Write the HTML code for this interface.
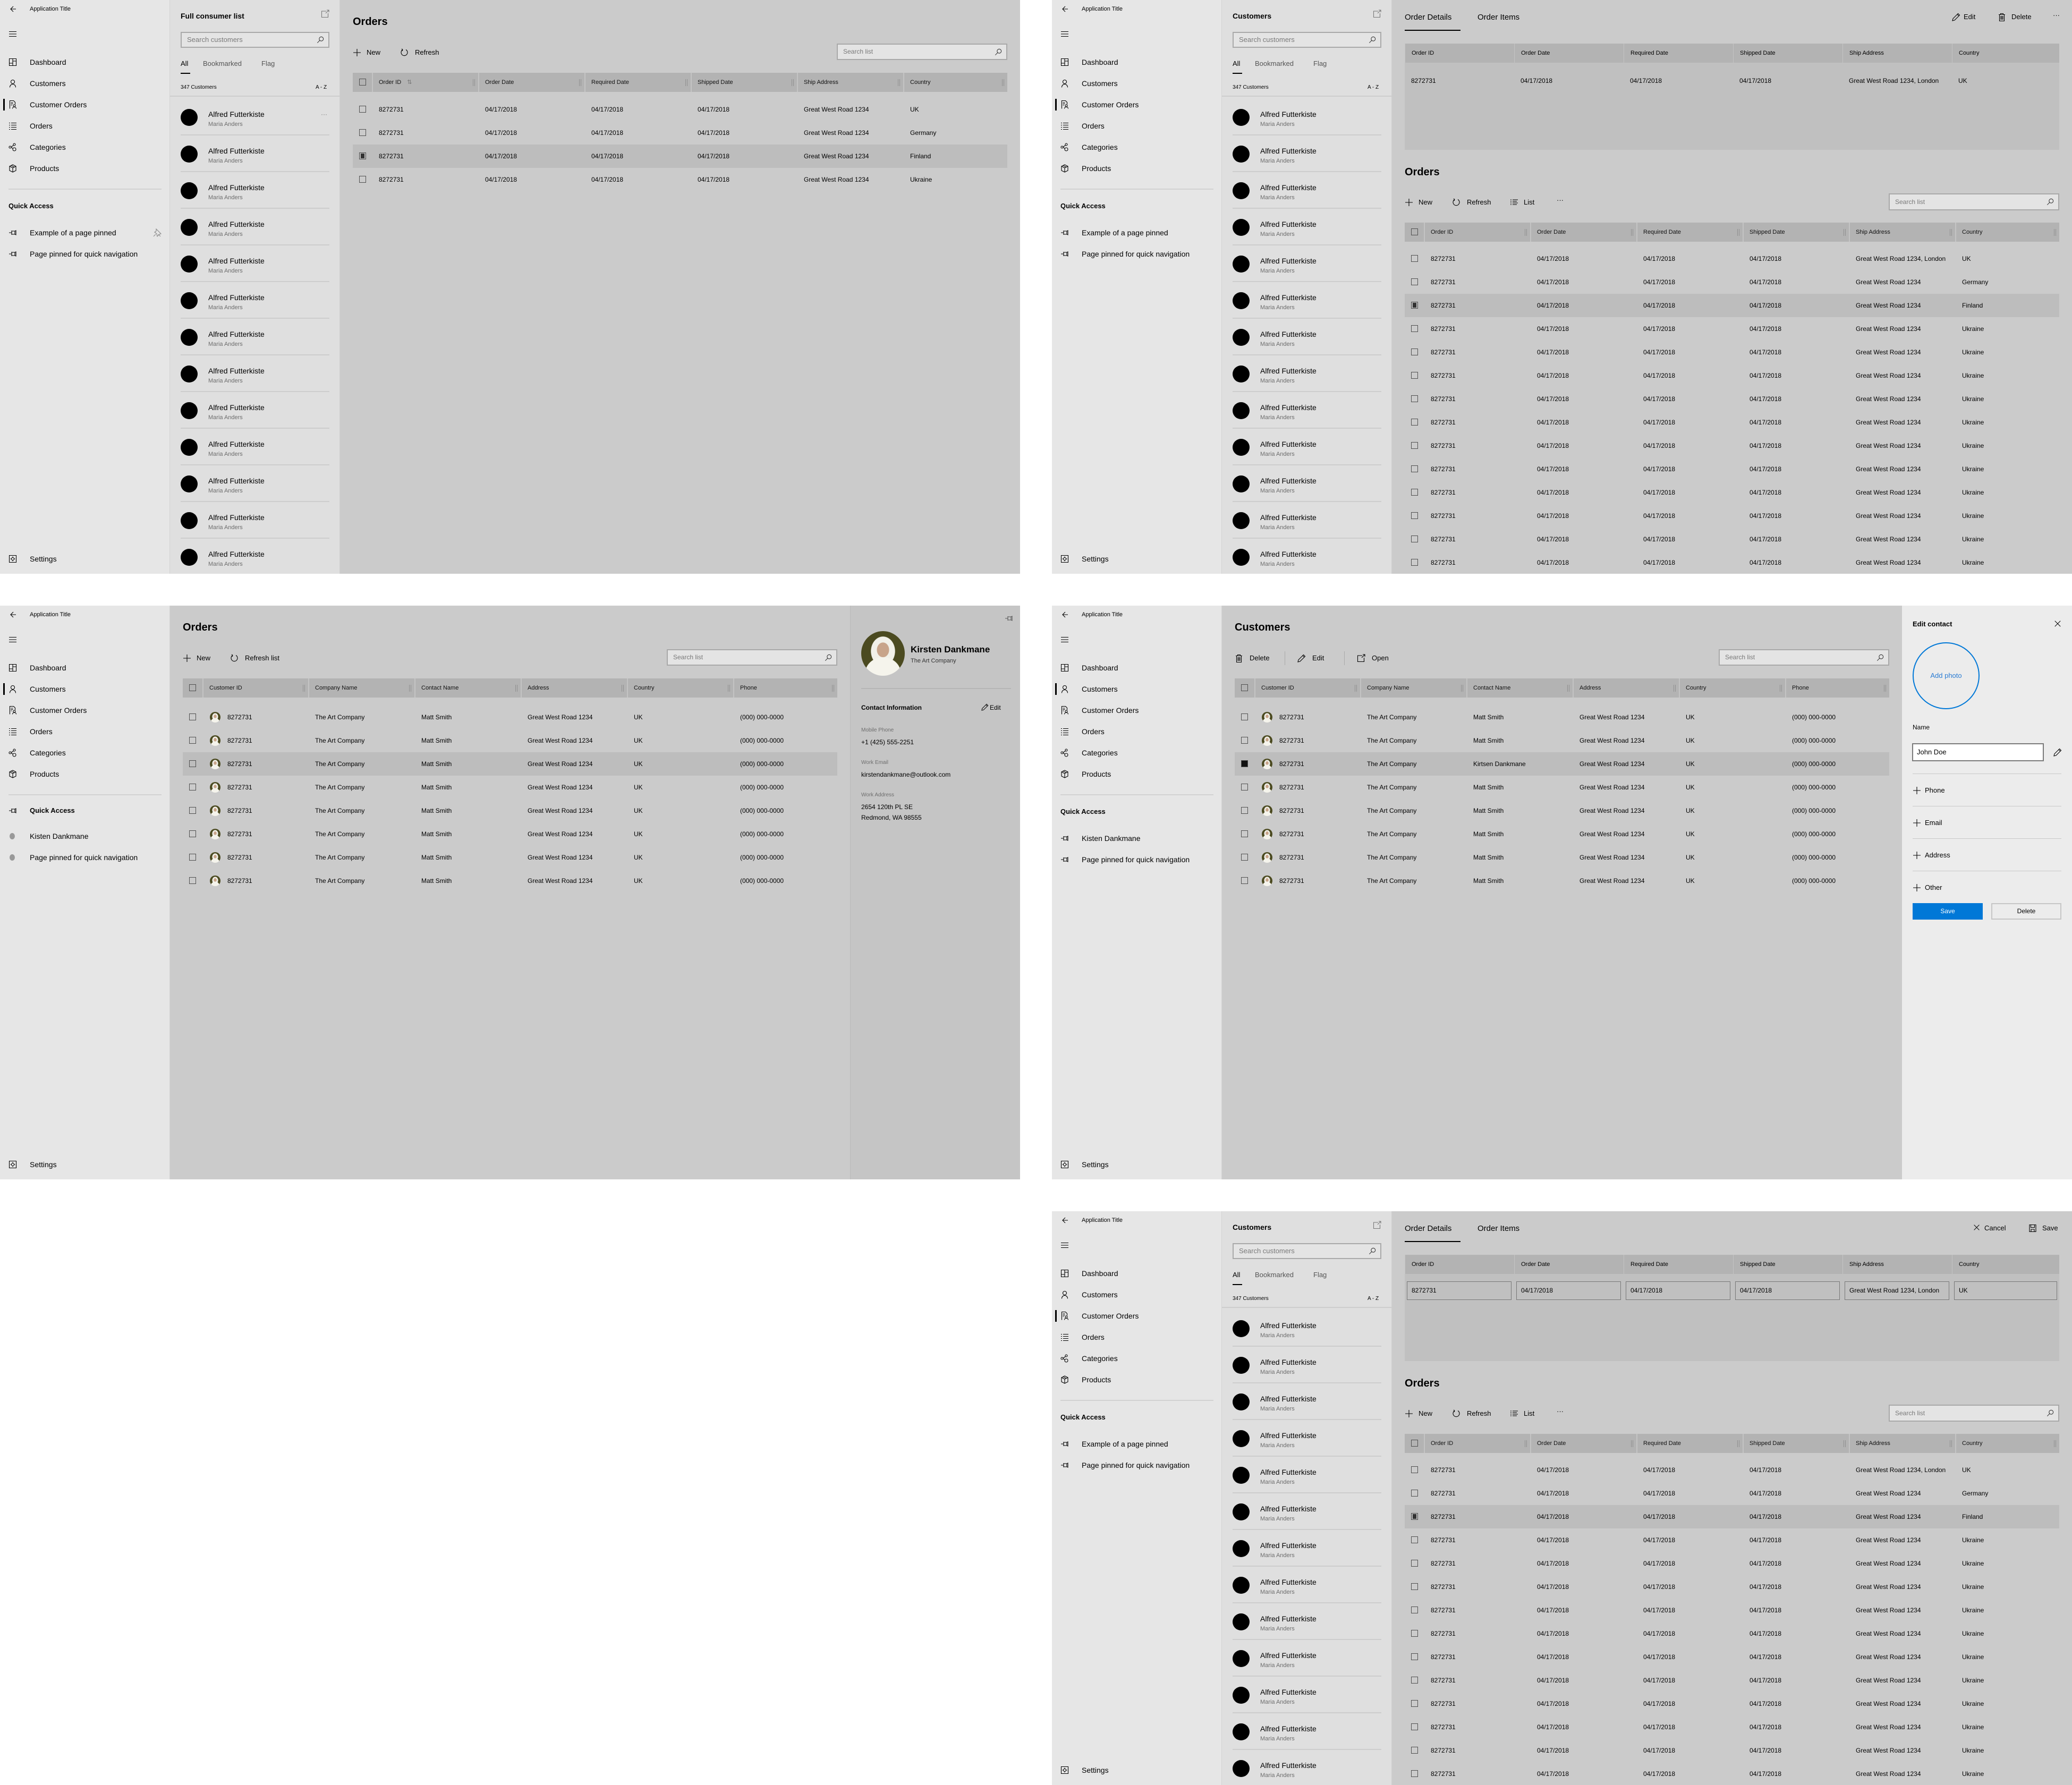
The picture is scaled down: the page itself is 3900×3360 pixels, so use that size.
<!DOCTYPE html>
<html><head><meta charset="utf-8">
<style>
*{margin:0;padding:0;box-sizing:border-box}
body{width:3900px;height:3360px;background:#fff;position:relative;font-family:"Liberation Sans",sans-serif;color:#000;overflow:hidden}
.p{position:absolute;width:1920px;height:1080px;overflow:hidden;background:#cbcbcb}
.a{position:absolute;white-space:nowrap}
svg.i{position:absolute;width:16px;height:16px;fill:none;stroke:#000;stroke-width:1.1}
.nav{position:absolute;left:0;top:0;width:320px;height:1080px;background:#e6e6e6;border-right:1px solid #d4d4d4}
.nt{position:absolute;left:56px;font-size:14px;line-height:18px;white-space:nowrap}
.nav svg.i{left:16px}
.bar{position:absolute;left:6px;width:3px;height:22px;background:#000}
.dv{position:absolute;left:16px;width:288px;height:2px;background:#d2d2d2;top:355px}
.lp{position:absolute;left:320px;top:0;width:320px;height:1080px;background:#dfdfdf;border-right:1px solid #d0d0d0}
.it{position:absolute;left:20px;width:280px;height:69px;border-bottom:2px solid #cdcdcd}
.it .av{position:absolute;left:0;top:19px;width:32px;height:32px;border-radius:50%;background:#000}
.it .n{position:absolute;left:52px;top:21px;font-size:14px;white-space:nowrap}
.it .s{position:absolute;left:52px;top:42px;font-size:11px;color:#6e6e6e;white-space:nowrap}
.sb{position:absolute;border:2px solid #a9a9a9;background:#e4e4e4;font-size:13px;color:#7a7a7a;padding-left:10px;white-space:nowrap}
.sb svg{position:absolute;right:8px;width:14px;height:14px;fill:none;stroke:#333;stroke-width:1.2}
.th{position:absolute;height:36px;width:1232px;background:#b3b3b3}
.hc{position:absolute;top:0;height:36px;border-left:2px solid #c4c4c4;font-size:11px;line-height:36px;padding-left:11px;white-space:nowrap;color:#111}
.hc i{position:absolute;right:6px;top:12px;width:4px;height:13px;border-left:1px solid #909090;border-right:1px solid #909090}
.r{position:absolute;height:44px;width:1232px;font-size:12px;line-height:44px}
.r span{position:absolute;white-space:nowrap}
.sel{background:#bdbdbd}
.cb{position:absolute;left:12px;top:15px;width:13px;height:13px;border:1px solid #505050}
.cb.on{background:radial-gradient(#333 0 0) center/7px 9px no-repeat}
.c1{left:49px}.c2{left:249px}.c3{left:449px}.c4{left:649px}.c5{left:849px}.c6{left:1049px}
.ph{border-radius:50%;background:radial-gradient(ellipse 45% 40% at 50% 95%,#f5f4ec 0 90%,transparent 92%),radial-gradient(ellipse 17% 20% at 50% 42%,#c8a48a 0 80%,transparent 85%),radial-gradient(ellipse 32% 38% at 50% 45%,#f1f0e8 0 85%,transparent 88%),#4b4a20}
.r .ph{position:absolute;left:51px;top:12px;width:20px;height:20px}
.tb{position:absolute;font-size:13px;line-height:18px;white-space:nowrap}
.h1{position:absolute;font-size:20px;font-weight:bold;white-space:nowrap}
.dbox{position:absolute;left:664px;top:82px;width:1232px;height:200px;background:#c0c0c0}
.dh{position:absolute;top:0;height:36px;width:206px;background:#b3b3b3;border-left:1px solid #c4c4c4;font-size:11px;line-height:36px;padding-left:12px}
.dd{position:absolute;font-size:12px;white-space:nowrap}
.inp{position:absolute;top:50px;height:35px;width:197px;border:1px solid #777;font-size:12px;line-height:33px;padding-left:8px;white-space:nowrap;overflow:hidden}
.sm{font-size:11px;color:#6e6e6e}
</style></head><body>
<svg width="0" height="0" style="position:absolute">
<defs>
<symbol id="back" viewBox="0 0 16 16"><path d="M9 3L4 8l5 5M4 8h10"/></symbol>
<symbol id="ham" viewBox="0 0 16 16"><path d="M1 3.5h14M1 8h14M1 12.5h14"/></symbol>
<symbol id="dash" viewBox="0 0 16 16"><path d="M1.5 1.5h13v13h-13zM8 1.5v13M1.5 10h6.5M8 6h6.5"/></symbol>
<symbol id="pers" viewBox="0 0 16 16"><circle cx="8" cy="5" r="3.5"/><path d="M2.5 15.5c0-3.5 2.5-6 5.5-6s5.5 2.5 5.5 6"/></symbol>
<symbol id="cord" viewBox="0 0 16 16"><path d="M2.5 15.5V.5h7l3 3v4M4.5 4h4M4.5 6.5h4M4.5 9h2"/><circle cx="11" cy="10" r="2"/><path d="M7.5 15.5c0-2 1.5-3.2 3.5-3.2s3.5 1.2 3.5 3.2"/></symbol>
<symbol id="list" viewBox="0 0 16 16"><path d="M1 2.5h2M5 2.5h10M1 6.5h2M5 6.5h10M1 10.5h2M5 10.5h10M1 14.5h2M5 14.5h10"/></symbol>
<symbol id="cat" viewBox="0 0 16 16"><circle cx="3" cy="8" r="2"/><circle cx="11" cy="3" r="2"/><circle cx="11" cy="12" r="3"/><path d="M5 7.5l4.5-3M5 8.5l3.5 2"/></symbol>
<symbol id="prod" viewBox="0 0 16 16"><path d="M8 1l6 3v8l-6 3-6-3V4zM2 4l6 3 6-3M8 7v8M5 2.5l6 3"/></symbol>
<symbol id="pin" viewBox="0 0 16 16"><path d="M1 8h5M6 4v8M6 5h6v6H6M12 5l2-1v8l-2-1"/></symbol>
<symbol id="set" viewBox="0 0 16 16"><path d="M1.5 1.5h13v13h-13z"/><circle cx="8" cy="8" r="2.5"/><path d="M8 3.5v2M8 10.5v2M3.5 8h2M10.5 8h2"/></symbol>
<symbol id="plus" viewBox="0 0 16 16"><path d="M8 1v14M1 8h14"/></symbol>
<symbol id="ref" viewBox="0 0 16 16"><path d="M5 2.5A6 6 0 1 0 11 2.5M5 2.5L3 1M5 2.5L4 5"/></symbol>
<symbol id="lst" viewBox="0 0 16 16"><path d="M1 3h2M1 6h2M1 9h2M1 12h2M5 3h10M5 6h8M5 9h10M5 12h8"/></symbol>
<symbol id="lens" viewBox="0 0 16 16"><circle cx="10" cy="6" r="4.5"/><path d="M6.8 9.2L1.5 14.5"/></symbol>
<symbol id="pop" viewBox="0 0 16 16"><path d="M10 3H1.5v11.5h12V7M9 7l6-6M11 1h4v4"/></symbol>
<symbol id="edit" viewBox="0 0 16 16"><path d="M11.5 1.5l3 3L5 14l-4 1 1-4zM10 3l3 3"/></symbol>
<symbol id="del" viewBox="0 0 16 16"><path d="M2 3.5h12M5.5 3.5V1.5h5v2M3.5 3.5v12h9v-12M6 6v7M8 6v7M10 6v7"/></symbol>
<symbol id="x" viewBox="0 0 16 16"><path d="M2 2l12 12M14 2L2 14"/></symbol>
<symbol id="save" viewBox="0 0 16 16"><path d="M2 1.5h12v13H2zM4.5 1.5v5h7v-5M5 10h6v4.5H5z"/></symbol>
<symbol id="unpin" viewBox="0 0 16 16"><path d="M6 1l9 9-3 1-4 4-1-5-4-3 3-2zM1 15l4-4M10 11l4 4"/></symbol>
</defs></svg>

<!-- ================= PANEL A ================= -->
<div class="p" style="left:0;top:0">
 <div class="nav">
  <svg class="i" style="top:9px"><use href="#back"/></svg><div class="nt" style="top:8px;font-size:11px">Application Title</div>
  <svg class="i" style="top:56px"><use href="#ham"/></svg>
  <svg class="i" style="top:109px"><use href="#dash"/></svg><div class="nt" style="top:108px">Dashboard</div>
  <svg class="i" style="top:149px"><use href="#pers"/></svg><div class="nt" style="top:148px">Customers</div>
  <div class="bar" style="top:186px"></div>
  <svg class="i" style="top:189px"><use href="#cord"/></svg><div class="nt" style="top:188px">Customer Orders</div>
  <svg class="i" style="top:229px"><use href="#list"/></svg><div class="nt" style="top:228px">Orders</div>
  <svg class="i" style="top:269px"><use href="#cat"/></svg><div class="nt" style="top:268px">Categories</div>
  <svg class="i" style="top:309px"><use href="#prod"/></svg><div class="nt" style="top:308px">Products</div>
  <div class="dv"></div>
  <div class="nt" style="left:16px;top:379px;font-weight:bold;font-size:13px">Quick Access</div>
  <svg class="i" style="top:430px"><use href="#pin"/></svg><div class="nt" style="top:429px">Example of a page pinned</div>
  <svg class="i" style="top:430px;left:288px;stroke:#888"><use href="#unpin"/></svg>
  <svg class="i" style="top:470px"><use href="#pin"/></svg><div class="nt" style="top:469px">Page pinned for quick navigation</div>
  <svg class="i" style="top:1044px"><use href="#set"/></svg><div class="nt" style="top:1043px">Settings</div>
 </div>
 <div class="lp">
  <div class="a" style="left:20px;top:22px;font-size:14px;font-weight:bold">Full consumer list</div>
  <svg class="i" style="left:284px;top:18px;stroke:#777"><use href="#pop"/></svg>
  <div class="sb" style="left:20px;top:60px;width:280px;height:30px;line-height:26px">Search customers<svg style="top:6px"><use href="#lens"/></svg></div>
  <div class="a" style="left:20px;top:112px;font-size:13px">All</div>
  <div class="a" style="left:20px;top:137px;width:18px;height:2px;background:#000"></div>
  <div class="a" style="left:62px;top:112px;font-size:13px;color:#555">Bookmarked</div>
  <div class="a" style="left:172px;top:112px;font-size:13px;color:#555">Flag</div>
  <div class="a" style="left:20px;top:159px;font-size:10px">347 Customers</div>
  <div class="a" style="left:274px;top:159px;font-size:10px">A - Z</div>
  <div class="a" style="left:0;top:180px;width:320px;height:2px;background:#cdcdcd"></div>
  <div class="it" style="top:186px"><div class="av"></div><div class="n">Alfred Futterkiste</div><div class="s">Maria Anders</div><div class="a" style="left:264px;top:22px;color:#777;font-size:12px">···</div></div>
  <div class="it" style="top:255px"><div class="av"></div><div class="n">Alfred Futterkiste</div><div class="s">Maria Anders</div></div>
  <div class="it" style="top:324px"><div class="av"></div><div class="n">Alfred Futterkiste</div><div class="s">Maria Anders</div></div>
  <div class="it" style="top:393px"><div class="av"></div><div class="n">Alfred Futterkiste</div><div class="s">Maria Anders</div></div>
  <div class="it" style="top:462px"><div class="av"></div><div class="n">Alfred Futterkiste</div><div class="s">Maria Anders</div></div>
  <div class="it" style="top:531px"><div class="av"></div><div class="n">Alfred Futterkiste</div><div class="s">Maria Anders</div></div>
  <div class="it" style="top:600px"><div class="av"></div><div class="n">Alfred Futterkiste</div><div class="s">Maria Anders</div></div>
  <div class="it" style="top:669px"><div class="av"></div><div class="n">Alfred Futterkiste</div><div class="s">Maria Anders</div></div>
  <div class="it" style="top:738px"><div class="av"></div><div class="n">Alfred Futterkiste</div><div class="s">Maria Anders</div></div>
  <div class="it" style="top:807px"><div class="av"></div><div class="n">Alfred Futterkiste</div><div class="s">Maria Anders</div></div>
  <div class="it" style="top:876px"><div class="av"></div><div class="n">Alfred Futterkiste</div><div class="s">Maria Anders</div></div>
  <div class="it" style="top:945px"><div class="av"></div><div class="n">Alfred Futterkiste</div><div class="s">Maria Anders</div></div>
  <div class="it" style="top:1014px"><div class="av"></div><div class="n">Alfred Futterkiste</div><div class="s">Maria Anders</div></div>
 </div>
 <div class="h1" style="left:664px;top:30px">Orders</div>
 <svg class="i" style="left:664px;top:91px"><use href="#plus"/></svg><div class="tb" style="left:690px;top:90px">New</div>
 <svg class="i" style="left:753px;top:91px"><use href="#ref"/></svg><div class="tb" style="left:781px;top:90px">Refresh</div>
 <div class="sb" style="left:1575px;top:82px;width:321px;height:31px;line-height:27px;font-size:12px">Search list<svg style="top:7px"><use href="#lens"/></svg></div>
 <div class="th" style="left:664px;top:137px">
  <i class="cb" style="top:11px"></i>
  <div class="hc" style="left:36px;width:200px;padding-left:11px">Order ID <span style="color:#777;margin-left:8px">⇅</span><i></i></div>
  <div class="hc" style="left:236px;width:200px">Order Date<i></i></div>
  <div class="hc" style="left:436px;width:200px">Required Date<i></i></div>
  <div class="hc" style="left:636px;width:200px">Shipped Date<i></i></div>
  <div class="hc" style="left:836px;width:200px">Ship Address<i></i></div>
  <div class="hc" style="left:1036px;width:196px">Country<i></i></div>
 </div>
 <div class="r" style="left:664px;top:184px"><i class="cb"></i><span class="c1">8272731</span><span class="c2">04/17/2018</span><span class="c3">04/17/2018</span><span class="c4">04/17/2018</span><span class="c5">Great West Road 1234</span><span class="c6">UK</span></div>
 <div class="r" style="left:664px;top:228px"><i class="cb"></i><span class="c1">8272731</span><span class="c2">04/17/2018</span><span class="c3">04/17/2018</span><span class="c4">04/17/2018</span><span class="c5">Great West Road 1234</span><span class="c6">Germany</span></div>
 <div class="r sel" style="left:664px;top:272px"><i class="cb on"></i><span class="c1">8272731</span><span class="c2">04/17/2018</span><span class="c3">04/17/2018</span><span class="c4">04/17/2018</span><span class="c5">Great West Road 1234</span><span class="c6">Finland</span></div>
 <div class="r" style="left:664px;top:316px"><i class="cb"></i><span class="c1">8272731</span><span class="c2">04/17/2018</span><span class="c3">04/17/2018</span><span class="c4">04/17/2018</span><span class="c5">Great West Road 1234</span><span class="c6">Ukraine</span></div>
</div>

<!-- ================= PANEL B ================= -->
<div class="p" style="left:1980px;top:0">
 <div class="nav">
  <svg class="i" style="top:9px"><use href="#back"/></svg><div class="nt" style="top:8px;font-size:11px">Application Title</div>
  <svg class="i" style="top:56px"><use href="#ham"/></svg>
  <svg class="i" style="top:109px"><use href="#dash"/></svg><div class="nt" style="top:108px">Dashboard</div>
  <svg class="i" style="top:149px"><use href="#pers"/></svg><div class="nt" style="top:148px">Customers</div>
  <div class="bar" style="top:186px"></div>
  <svg class="i" style="top:189px"><use href="#cord"/></svg><div class="nt" style="top:188px">Customer Orders</div>
  <svg class="i" style="top:229px"><use href="#list"/></svg><div class="nt" style="top:228px">Orders</div>
  <svg class="i" style="top:269px"><use href="#cat"/></svg><div class="nt" style="top:268px">Categories</div>
  <svg class="i" style="top:309px"><use href="#prod"/></svg><div class="nt" style="top:308px">Products</div>
  <div class="dv"></div>
  <div class="nt" style="left:16px;top:379px;font-weight:bold;font-size:13px">Quick Access</div>
  <svg class="i" style="top:430px"><use href="#pin"/></svg><div class="nt" style="top:429px">Example of a page pinned</div>
  <svg class="i" style="top:470px"><use href="#pin"/></svg><div class="nt" style="top:469px">Page pinned for quick navigation</div>
  <svg class="i" style="top:1044px"><use href="#set"/></svg><div class="nt" style="top:1043px">Settings</div>
 </div>
 <div class="lp">
  <div class="a" style="left:20px;top:22px;font-size:14px;font-weight:bold">Customers</div>
  <svg class="i" style="left:284px;top:18px;stroke:#777"><use href="#pop"/></svg>
  <div class="sb" style="left:20px;top:60px;width:280px;height:30px;line-height:26px">Search customers<svg style="top:6px"><use href="#lens"/></svg></div>
  <div class="a" style="left:20px;top:112px;font-size:13px">All</div>
  <div class="a" style="left:20px;top:137px;width:18px;height:2px;background:#000"></div>
  <div class="a" style="left:62px;top:112px;font-size:13px;color:#555">Bookmarked</div>
  <div class="a" style="left:172px;top:112px;font-size:13px;color:#555">Flag</div>
  <div class="a" style="left:20px;top:159px;font-size:10px">347 Customers</div>
  <div class="a" style="left:274px;top:159px;font-size:10px">A - Z</div>
  <div class="a" style="left:0;top:180px;width:320px;height:2px;background:#cdcdcd"></div>
  <div class="it" style="top:186px"><div class="av"></div><div class="n">Alfred Futterkiste</div><div class="s">Maria Anders</div></div>
  <div class="it" style="top:255px"><div class="av"></div><div class="n">Alfred Futterkiste</div><div class="s">Maria Anders</div></div>
  <div class="it" style="top:324px"><div class="av"></div><div class="n">Alfred Futterkiste</div><div class="s">Maria Anders</div></div>
  <div class="it" style="top:393px"><div class="av"></div><div class="n">Alfred Futterkiste</div><div class="s">Maria Anders</div></div>
  <div class="it" style="top:462px"><div class="av"></div><div class="n">Alfred Futterkiste</div><div class="s">Maria Anders</div></div>
  <div class="it" style="top:531px"><div class="av"></div><div class="n">Alfred Futterkiste</div><div class="s">Maria Anders</div></div>
  <div class="it" style="top:600px"><div class="av"></div><div class="n">Alfred Futterkiste</div><div class="s">Maria Anders</div></div>
  <div class="it" style="top:669px"><div class="av"></div><div class="n">Alfred Futterkiste</div><div class="s">Maria Anders</div></div>
  <div class="it" style="top:738px"><div class="av"></div><div class="n">Alfred Futterkiste</div><div class="s">Maria Anders</div></div>
  <div class="it" style="top:807px"><div class="av"></div><div class="n">Alfred Futterkiste</div><div class="s">Maria Anders</div></div>
  <div class="it" style="top:876px"><div class="av"></div><div class="n">Alfred Futterkiste</div><div class="s">Maria Anders</div></div>
  <div class="it" style="top:945px"><div class="av"></div><div class="n">Alfred Futterkiste</div><div class="s">Maria Anders</div></div>
  <div class="it" style="top:1014px"><div class="av"></div><div class="n">Alfred Futterkiste</div><div class="s">Maria Anders</div></div>
 </div>
 <div class="a" style="left:664px;top:24px;font-size:15px">Order Details</div>
 <div class="a" style="left:664px;top:56px;width:105px;height:2px;background:#000"></div>
 <div class="a" style="left:801px;top:24px;font-size:15px">Order Items</div>
 <svg class="i" style="left:1694px;top:24px"><use href="#edit"/></svg><div class="tb" style="left:1716px;top:23px">Edit</div>
 <svg class="i" style="left:1780px;top:24px"><use href="#del"/></svg><div class="tb" style="left:1806px;top:23px">Delete</div>
 <div class="tb" style="left:1884px;top:20px">···</div>
 <div class="dbox">
  <div class="dh" style="left:0">Order ID</div><div class="dh" style="left:206px">Order Date</div><div class="dh" style="left:412px">Required Date</div><div class="dh" style="left:618px">Shipped Date</div><div class="dh" style="left:824px">Ship Address</div><div class="dh" style="left:1030px;width:202px">Country</div>
  <div class="dd" style="left:12px;top:63px">8272731</div><div class="dd" style="left:218px;top:63px">04/17/2018</div><div class="dd" style="left:424px;top:63px">04/17/2018</div><div class="dd" style="left:630px;top:63px">04/17/2018</div><div class="dd" style="left:836px;top:63px">Great West Road 1234, London</div><div class="dd" style="left:1042px;top:63px">UK</div>
 </div>
 <div class="h1" style="left:664px;top:313px">Orders</div>
 <svg class="i" style="left:664px;top:373px"><use href="#plus"/></svg><div class="tb" style="left:690px;top:372px">New</div>
 <svg class="i" style="left:753px;top:373px"><use href="#ref"/></svg><div class="tb" style="left:781px;top:372px">Refresh</div>
 <svg class="i" style="left:862px;top:373px"><use href="#lst"/></svg><div class="tb" style="left:888px;top:372px">List</div>
 <div class="tb" style="left:950px;top:368px">···</div>
 <div class="sb" style="left:1575px;top:364px;width:321px;height:32px;line-height:28px;font-size:12px">Search list<svg style="top:7px"><use href="#lens"/></svg></div>
 <div class="th" style="left:664px;top:419px">
  <i class="cb" style="top:11px"></i>
  <div class="hc" style="left:36px;width:200px">Order ID<i></i></div>
  <div class="hc" style="left:236px;width:200px">Order Date<i></i></div>
  <div class="hc" style="left:436px;width:200px">Required Date<i></i></div>
  <div class="hc" style="left:636px;width:200px">Shipped Date<i></i></div>
  <div class="hc" style="left:836px;width:200px">Ship Address<i></i></div>
  <div class="hc" style="left:1036px;width:196px">Country<i></i></div>
 </div>
 <div class="r" style="left:664px;top:465px"><i class="cb"></i><span class="c1">8272731</span><span class="c2">04/17/2018</span><span class="c3">04/17/2018</span><span class="c4">04/17/2018</span><span class="c5">Great West Road 1234, London</span><span class="c6">UK</span></div>
 <div class="r" style="left:664px;top:509px"><i class="cb"></i><span class="c1">8272731</span><span class="c2">04/17/2018</span><span class="c3">04/17/2018</span><span class="c4">04/17/2018</span><span class="c5">Great West Road 1234</span><span class="c6">Germany</span></div>
 <div class="r sel" style="left:664px;top:553px"><i class="cb on"></i><span class="c1">8272731</span><span class="c2">04/17/2018</span><span class="c3">04/17/2018</span><span class="c4">04/17/2018</span><span class="c5">Great West Road 1234</span><span class="c6">Finland</span></div>
 <div class="r" style="left:664px;top:597px"><i class="cb"></i><span class="c1">8272731</span><span class="c2">04/17/2018</span><span class="c3">04/17/2018</span><span class="c4">04/17/2018</span><span class="c5">Great West Road 1234</span><span class="c6">Ukraine</span></div>
 <div class="r" style="left:664px;top:641px"><i class="cb"></i><span class="c1">8272731</span><span class="c2">04/17/2018</span><span class="c3">04/17/2018</span><span class="c4">04/17/2018</span><span class="c5">Great West Road 1234</span><span class="c6">Ukraine</span></div>
 <div class="r" style="left:664px;top:685px"><i class="cb"></i><span class="c1">8272731</span><span class="c2">04/17/2018</span><span class="c3">04/17/2018</span><span class="c4">04/17/2018</span><span class="c5">Great West Road 1234</span><span class="c6">Ukraine</span></div>
 <div class="r" style="left:664px;top:729px"><i class="cb"></i><span class="c1">8272731</span><span class="c2">04/17/2018</span><span class="c3">04/17/2018</span><span class="c4">04/17/2018</span><span class="c5">Great West Road 1234</span><span class="c6">Ukraine</span></div>
 <div class="r" style="left:664px;top:773px"><i class="cb"></i><span class="c1">8272731</span><span class="c2">04/17/2018</span><span class="c3">04/17/2018</span><span class="c4">04/17/2018</span><span class="c5">Great West Road 1234</span><span class="c6">Ukraine</span></div>
 <div class="r" style="left:664px;top:817px"><i class="cb"></i><span class="c1">8272731</span><span class="c2">04/17/2018</span><span class="c3">04/17/2018</span><span class="c4">04/17/2018</span><span class="c5">Great West Road 1234</span><span class="c6">Ukraine</span></div>
 <div class="r" style="left:664px;top:861px"><i class="cb"></i><span class="c1">8272731</span><span class="c2">04/17/2018</span><span class="c3">04/17/2018</span><span class="c4">04/17/2018</span><span class="c5">Great West Road 1234</span><span class="c6">Ukraine</span></div>
 <div class="r" style="left:664px;top:905px"><i class="cb"></i><span class="c1">8272731</span><span class="c2">04/17/2018</span><span class="c3">04/17/2018</span><span class="c4">04/17/2018</span><span class="c5">Great West Road 1234</span><span class="c6">Ukraine</span></div>
 <div class="r" style="left:664px;top:949px"><i class="cb"></i><span class="c1">8272731</span><span class="c2">04/17/2018</span><span class="c3">04/17/2018</span><span class="c4">04/17/2018</span><span class="c5">Great West Road 1234</span><span class="c6">Ukraine</span></div>
 <div class="r" style="left:664px;top:993px"><i class="cb"></i><span class="c1">8272731</span><span class="c2">04/17/2018</span><span class="c3">04/17/2018</span><span class="c4">04/17/2018</span><span class="c5">Great West Road 1234</span><span class="c6">Ukraine</span></div>
 <div class="r" style="left:664px;top:1037px"><i class="cb"></i><span class="c1">8272731</span><span class="c2">04/17/2018</span><span class="c3">04/17/2018</span><span class="c4">04/17/2018</span><span class="c5">Great West Road 1234</span><span class="c6">Ukraine</span></div>
</div>

<!-- ================= PANEL C ================= -->
<div class="p" style="left:0;top:1140px">
 <div class="nav">
  <svg class="i" style="top:9px"><use href="#back"/></svg><div class="nt" style="top:8px;font-size:11px">Application Title</div>
  <svg class="i" style="top:56px"><use href="#ham"/></svg>
  <svg class="i" style="top:109px"><use href="#dash"/></svg><div class="nt" style="top:108px">Dashboard</div>
  <div class="bar" style="top:146px"></div>
  <svg class="i" style="top:149px"><use href="#pers"/></svg><div class="nt" style="top:148px">Customers</div>
  <svg class="i" style="top:189px"><use href="#cord"/></svg><div class="nt" style="top:188px">Customer Orders</div>
  <svg class="i" style="top:229px"><use href="#list"/></svg><div class="nt" style="top:228px">Orders</div>
  <svg class="i" style="top:269px"><use href="#cat"/></svg><div class="nt" style="top:268px">Categories</div>
  <svg class="i" style="top:309px"><use href="#prod"/></svg><div class="nt" style="top:308px">Products</div>
  <div class="dv"></div>
  <svg class="i" style="top:378px"><use href="#pin"/></svg><div class="nt" style="top:377px;font-weight:bold;font-size:13px">Quick Access</div>
  <div class="a" style="left:18px;top:428px;width:10px;height:12px;border-radius:50%;background:#999"></div><div class="nt" style="top:425px">Kisten Dankmane</div>
  <div class="a" style="left:18px;top:468px;width:10px;height:12px;border-radius:50%;background:#999"></div><div class="nt" style="top:465px">Page pinned for quick navigation</div>
  <svg class="i" style="top:1044px"><use href="#set"/></svg><div class="nt" style="top:1043px">Settings</div>
 </div>
 <div class="h1" style="left:344px;top:30px">Orders</div>
 <svg class="i" style="left:344px;top:91px"><use href="#plus"/></svg><div class="tb" style="left:370px;top:90px">New</div>
 <svg class="i" style="left:433px;top:91px"><use href="#ref"/></svg><div class="tb" style="left:461px;top:90px">Refresh list</div>
 <div class="sb" style="left:1255px;top:82px;width:321px;height:31px;line-height:27px;font-size:12px">Search list<svg style="top:7px"><use href="#lens"/></svg></div>
 <div class="th" style="left:344px;top:137px">
  <i class="cb" style="top:11px"></i>
  <div class="hc" style="left:37px;width:199px">Customer ID<i></i></div>
  <div class="hc" style="left:236px;width:200px">Company Name<i></i></div>
  <div class="hc" style="left:436px;width:200px">Contact Name<i></i></div>
  <div class="hc" style="left:636px;width:200px">Address<i></i></div>
  <div class="hc" style="left:836px;width:200px">Country<i></i></div>
  <div class="hc" style="left:1036px;width:196px">Phone<i></i></div>
 </div>
 <div class="r" style="left:344px;top:188px"><i class="cb"></i><b class="ph"></b><span style="left:84px">8272731</span><span class="c2">The Art Company</span><span class="c3">Matt Smith</span><span class="c4">Great West Road 1234</span><span class="c5">UK</span><span class="c6">(000) 000-0000</span></div>
 <div class="r" style="left:344px;top:232px"><i class="cb"></i><b class="ph"></b><span style="left:84px">8272731</span><span class="c2">The Art Company</span><span class="c3">Matt Smith</span><span class="c4">Great West Road 1234</span><span class="c5">UK</span><span class="c6">(000) 000-0000</span></div>
 <div class="r sel" style="left:344px;top:276px"><i class="cb"></i><b class="ph"></b><span style="left:84px">8272731</span><span class="c2">The Art Company</span><span class="c3">Matt Smith</span><span class="c4">Great West Road 1234</span><span class="c5">UK</span><span class="c6">(000) 000-0000</span></div>
 <div class="r" style="left:344px;top:320px"><i class="cb"></i><b class="ph"></b><span style="left:84px">8272731</span><span class="c2">The Art Company</span><span class="c3">Matt Smith</span><span class="c4">Great West Road 1234</span><span class="c5">UK</span><span class="c6">(000) 000-0000</span></div>
 <div class="r" style="left:344px;top:364px"><i class="cb"></i><b class="ph"></b><span style="left:84px">8272731</span><span class="c2">The Art Company</span><span class="c3">Matt Smith</span><span class="c4">Great West Road 1234</span><span class="c5">UK</span><span class="c6">(000) 000-0000</span></div>
 <div class="r" style="left:344px;top:408px"><i class="cb"></i><b class="ph"></b><span style="left:84px">8272731</span><span class="c2">The Art Company</span><span class="c3">Matt Smith</span><span class="c4">Great West Road 1234</span><span class="c5">UK</span><span class="c6">(000) 000-0000</span></div>
 <div class="r" style="left:344px;top:452px"><i class="cb"></i><b class="ph"></b><span style="left:84px">8272731</span><span class="c2">The Art Company</span><span class="c3">Matt Smith</span><span class="c4">Great West Road 1234</span><span class="c5">UK</span><span class="c6">(000) 000-0000</span></div>
 <div class="r" style="left:344px;top:496px"><i class="cb"></i><b class="ph"></b><span style="left:84px">8272731</span><span class="c2">The Art Company</span><span class="c3">Matt Smith</span><span class="c4">Great West Road 1234</span><span class="c5">UK</span><span class="c6">(000) 000-0000</span></div>
 <div class="a" style="left:1600px;top:0;width:320px;height:1080px;background:#c5c5c5;border-left:1px solid #b9b9b9">
  <svg class="i" style="left:290px;top:16px;stroke:#555"><use href="#pin"/></svg>
  <div class="a ph" style="left:20px;top:48px;width:82px;height:84px"></div>
  <div class="a" style="left:113px;top:73px;font-size:17px;font-weight:bold">Kirsten Dankmane</div>
  <div class="a" style="left:113px;top:98px;font-size:11px;color:#333">The Art Company</div>
  <div class="a" style="left:20px;top:155px;width:282px;height:2px;background:#b5b5b5"></div>
  <div class="a" style="left:20px;top:185px;font-size:12px;font-weight:bold">Contact Information</div>
  <svg class="i" style="left:246px;top:184px;width:14px;height:14px"><use href="#edit"/></svg><div class="a" style="left:262px;top:185px;font-size:12px">Edit</div>
  <div class="a sm" style="left:20px;top:229px;font-size:10px">Mobile Phone</div>
  <div class="a" style="left:20px;top:250px;font-size:12px">+1 (425) 555-2251</div>
  <div class="a sm" style="left:20px;top:290px;font-size:10px">Work Email</div>
  <div class="a" style="left:20px;top:311px;font-size:12px">kirstendankmane@outlook.com</div>
  <div class="a sm" style="left:20px;top:351px;font-size:10px">Work Address</div>
  <div class="a" style="left:20px;top:372px;font-size:12px">2654 120th PL SE</div>
  <div class="a" style="left:20px;top:392px;font-size:12px">Redmond, WA 98555</div>
 </div>
</div>

<!-- ================= PANEL D ================= -->
<div class="p" style="left:1980px;top:1140px">
 <div class="nav">
  <svg class="i" style="top:9px"><use href="#back"/></svg><div class="nt" style="top:8px;font-size:11px">Application Title</div>
  <svg class="i" style="top:56px"><use href="#ham"/></svg>
  <svg class="i" style="top:109px"><use href="#dash"/></svg><div class="nt" style="top:108px">Dashboard</div>
  <div class="bar" style="top:146px"></div>
  <svg class="i" style="top:149px"><use href="#pers"/></svg><div class="nt" style="top:148px">Customers</div>
  <svg class="i" style="top:189px"><use href="#cord"/></svg><div class="nt" style="top:188px">Customer Orders</div>
  <svg class="i" style="top:229px"><use href="#list"/></svg><div class="nt" style="top:228px">Orders</div>
  <svg class="i" style="top:269px"><use href="#cat"/></svg><div class="nt" style="top:268px">Categories</div>
  <svg class="i" style="top:309px"><use href="#prod"/></svg><div class="nt" style="top:308px">Products</div>
  <div class="dv"></div>
  <div class="nt" style="left:16px;top:379px;font-weight:bold;font-size:13px">Quick Access</div>
  <svg class="i" style="top:430px"><use href="#pin"/></svg><div class="nt" style="top:429px">Kisten Dankmane</div>
  <svg class="i" style="top:470px"><use href="#pin"/></svg><div class="nt" style="top:469px">Page pinned for quick navigation</div>
  <svg class="i" style="top:1044px"><use href="#set"/></svg><div class="nt" style="top:1043px">Settings</div>
 </div>
 <div class="h1" style="left:344px;top:30px">Customers</div>
 <svg class="i" style="left:344px;top:91px"><use href="#del"/></svg><div class="tb" style="left:372px;top:90px">Delete</div>
 <div class="a" style="left:438px;top:86px;width:1px;height:26px;background:#aaa"></div>
 <svg class="i" style="left:462px;top:91px"><use href="#edit"/></svg><div class="tb" style="left:490px;top:90px">Edit</div>
 <div class="a" style="left:550px;top:86px;width:1px;height:26px;background:#aaa"></div>
 <svg class="i" style="left:574px;top:91px"><use href="#pop"/></svg><div class="tb" style="left:602px;top:90px">Open</div>
 <div class="sb" style="left:1255px;top:82px;width:321px;height:31px;line-height:27px;font-size:12px">Search list<svg style="top:7px"><use href="#lens"/></svg></div>
 <div class="th" style="left:344px;top:137px">
  <i class="cb" style="top:11px"></i>
  <div class="hc" style="left:37px;width:199px">Customer ID<i></i></div>
  <div class="hc" style="left:236px;width:200px">Company Name<i></i></div>
  <div class="hc" style="left:436px;width:200px">Contact Name<i></i></div>
  <div class="hc" style="left:636px;width:200px">Address<i></i></div>
  <div class="hc" style="left:836px;width:200px">Country<i></i></div>
  <div class="hc" style="left:1036px;width:196px">Phone<i></i></div>
 </div>
 <div class="r" style="left:344px;top:188px"><i class="cb"></i><b class="ph"></b><span style="left:84px">8272731</span><span class="c2">The Art Company</span><span class="c3">Matt Smith</span><span class="c4">Great West Road 1234</span><span class="c5">UK</span><span class="c6">(000) 000-0000</span></div>
 <div class="r" style="left:344px;top:232px"><i class="cb"></i><b class="ph"></b><span style="left:84px">8272731</span><span class="c2">The Art Company</span><span class="c3">Matt Smith</span><span class="c4">Great West Road 1234</span><span class="c5">UK</span><span class="c6">(000) 000-0000</span></div>
 <div class="r sel" style="left:344px;top:276px"><i class="cb" style="background:#111"></i><b class="ph"></b><span style="left:84px">8272731</span><span class="c2">The Art Company</span><span class="c3">Kirtsen Dankmane</span><span class="c4">Great West Road 1234</span><span class="c5">UK</span><span class="c6">(000) 000-0000</span></div>
 <div class="r" style="left:344px;top:320px"><i class="cb"></i><b class="ph"></b><span style="left:84px">8272731</span><span class="c2">The Art Company</span><span class="c3">Matt Smith</span><span class="c4">Great West Road 1234</span><span class="c5">UK</span><span class="c6">(000) 000-0000</span></div>
 <div class="r" style="left:344px;top:364px"><i class="cb"></i><b class="ph"></b><span style="left:84px">8272731</span><span class="c2">The Art Company</span><span class="c3">Matt Smith</span><span class="c4">Great West Road 1234</span><span class="c5">UK</span><span class="c6">(000) 000-0000</span></div>
 <div class="r" style="left:344px;top:408px"><i class="cb"></i><b class="ph"></b><span style="left:84px">8272731</span><span class="c2">The Art Company</span><span class="c3">Matt Smith</span><span class="c4">Great West Road 1234</span><span class="c5">UK</span><span class="c6">(000) 000-0000</span></div>
 <div class="r" style="left:344px;top:452px"><i class="cb"></i><b class="ph"></b><span style="left:84px">8272731</span><span class="c2">The Art Company</span><span class="c3">Matt Smith</span><span class="c4">Great West Road 1234</span><span class="c5">UK</span><span class="c6">(000) 000-0000</span></div>
 <div class="r" style="left:344px;top:496px"><i class="cb"></i><b class="ph"></b><span style="left:84px">8272731</span><span class="c2">The Art Company</span><span class="c3">Matt Smith</span><span class="c4">Great West Road 1234</span><span class="c5">UK</span><span class="c6">(000) 000-0000</span></div>
 <div class="a" style="left:1600px;top:0;width:320px;height:1080px;background:#ececec">
  <div class="a" style="left:20px;top:27px;font-size:13px;font-weight:bold">Edit contact</div>
  <svg class="i" style="left:286px;top:27px;width:14px;height:14px"><use href="#x"/></svg>
  <div class="a" style="left:20px;top:69px;width:126px;height:126px;border:2px solid #0078d7;border-radius:50%;color:#2b7cd3;font-size:13px;text-align:center;line-height:122px">Add photo</div>
  <div class="a" style="left:20px;top:222px;font-size:12px">Name</div>
  <div class="a" style="left:19px;top:259px;width:248px;height:34px;background:#fff;border:2px solid #7a7a7a;font-size:13px;line-height:30px;padding-left:7px">John Doe</div>
  <svg class="i" style="left:285px;top:268px"><use href="#edit"/></svg>
  <div class="a" style="left:20px;top:316px;width:280px;height:1px;background:#c8c8c8"></div>
  <svg class="i" style="left:20px;top:340px"><use href="#plus"/></svg><div class="a" style="left:43px;top:340px;font-size:13px">Phone</div>
  <div class="a" style="left:20px;top:377px;width:280px;height:1px;background:#c8c8c8"></div>
  <svg class="i" style="left:20px;top:401px"><use href="#plus"/></svg><div class="a" style="left:43px;top:401px;font-size:13px">Email</div>
  <div class="a" style="left:20px;top:438px;width:280px;height:1px;background:#c8c8c8"></div>
  <svg class="i" style="left:20px;top:462px"><use href="#plus"/></svg><div class="a" style="left:43px;top:462px;font-size:13px">Address</div>
  <div class="a" style="left:20px;top:499px;width:280px;height:1px;background:#c8c8c8"></div>
  <svg class="i" style="left:20px;top:523px"><use href="#plus"/></svg><div class="a" style="left:43px;top:523px;font-size:13px">Other</div>
  <div class="a" style="left:20px;top:560px;width:132px;height:31px;background:#0078d7;color:#fff;font-size:12px;text-align:center;line-height:31px">Save</div>
  <div class="a" style="left:168px;top:560px;width:132px;height:31px;border:2px solid #c6c6c6;font-size:12px;text-align:center;line-height:27px">Delete</div>
 </div>
</div>

<!-- ================= PANEL E ================= -->
<div class="p" style="left:1980px;top:2280px">
 <div class="nav">
  <svg class="i" style="top:9px"><use href="#back"/></svg><div class="nt" style="top:8px;font-size:11px">Application Title</div>
  <svg class="i" style="top:56px"><use href="#ham"/></svg>
  <svg class="i" style="top:109px"><use href="#dash"/></svg><div class="nt" style="top:108px">Dashboard</div>
  <svg class="i" style="top:149px"><use href="#pers"/></svg><div class="nt" style="top:148px">Customers</div>
  <div class="bar" style="top:186px"></div>
  <svg class="i" style="top:189px"><use href="#cord"/></svg><div class="nt" style="top:188px">Customer Orders</div>
  <svg class="i" style="top:229px"><use href="#list"/></svg><div class="nt" style="top:228px">Orders</div>
  <svg class="i" style="top:269px"><use href="#cat"/></svg><div class="nt" style="top:268px">Categories</div>
  <svg class="i" style="top:309px"><use href="#prod"/></svg><div class="nt" style="top:308px">Products</div>
  <div class="dv"></div>
  <div class="nt" style="left:16px;top:379px;font-weight:bold;font-size:13px">Quick Access</div>
  <svg class="i" style="top:430px"><use href="#pin"/></svg><div class="nt" style="top:429px">Example of a page pinned</div>
  <svg class="i" style="top:470px"><use href="#pin"/></svg><div class="nt" style="top:469px">Page pinned for quick navigation</div>
  <svg class="i" style="top:1044px"><use href="#set"/></svg><div class="nt" style="top:1043px">Settings</div>
 </div>
 <div class="lp">
  <div class="a" style="left:20px;top:22px;font-size:14px;font-weight:bold">Customers</div>
  <svg class="i" style="left:284px;top:18px;stroke:#777"><use href="#pop"/></svg>
  <div class="sb" style="left:20px;top:60px;width:280px;height:30px;line-height:26px">Search customers<svg style="top:6px"><use href="#lens"/></svg></div>
  <div class="a" style="left:20px;top:112px;font-size:13px">All</div>
  <div class="a" style="left:20px;top:137px;width:18px;height:2px;background:#000"></div>
  <div class="a" style="left:62px;top:112px;font-size:13px;color:#555">Bookmarked</div>
  <div class="a" style="left:172px;top:112px;font-size:13px;color:#555">Flag</div>
  <div class="a" style="left:20px;top:159px;font-size:10px">347 Customers</div>
  <div class="a" style="left:274px;top:159px;font-size:10px">A - Z</div>
  <div class="a" style="left:0;top:180px;width:320px;height:2px;background:#cdcdcd"></div>
  <div class="it" style="top:186px"><div class="av"></div><div class="n">Alfred Futterkiste</div><div class="s">Maria Anders</div></div>
  <div class="it" style="top:255px"><div class="av"></div><div class="n">Alfred Futterkiste</div><div class="s">Maria Anders</div></div>
  <div class="it" style="top:324px"><div class="av"></div><div class="n">Alfred Futterkiste</div><div class="s">Maria Anders</div></div>
  <div class="it" style="top:393px"><div class="av"></div><div class="n">Alfred Futterkiste</div><div class="s">Maria Anders</div></div>
  <div class="it" style="top:462px"><div class="av"></div><div class="n">Alfred Futterkiste</div><div class="s">Maria Anders</div></div>
  <div class="it" style="top:531px"><div class="av"></div><div class="n">Alfred Futterkiste</div><div class="s">Maria Anders</div></div>
  <div class="it" style="top:600px"><div class="av"></div><div class="n">Alfred Futterkiste</div><div class="s">Maria Anders</div></div>
  <div class="it" style="top:669px"><div class="av"></div><div class="n">Alfred Futterkiste</div><div class="s">Maria Anders</div></div>
  <div class="it" style="top:738px"><div class="av"></div><div class="n">Alfred Futterkiste</div><div class="s">Maria Anders</div></div>
  <div class="it" style="top:807px"><div class="av"></div><div class="n">Alfred Futterkiste</div><div class="s">Maria Anders</div></div>
  <div class="it" style="top:876px"><div class="av"></div><div class="n">Alfred Futterkiste</div><div class="s">Maria Anders</div></div>
  <div class="it" style="top:945px"><div class="av"></div><div class="n">Alfred Futterkiste</div><div class="s">Maria Anders</div></div>
  <div class="it" style="top:1014px"><div class="av"></div><div class="n">Alfred Futterkiste</div><div class="s">Maria Anders</div></div>
 </div>
 <div class="a" style="left:664px;top:24px;font-size:15px">Order Details</div>
 <div class="a" style="left:664px;top:56px;width:105px;height:2px;background:#000"></div>
 <div class="a" style="left:801px;top:24px;font-size:15px">Order Items</div>
 <svg class="i" style="left:1734px;top:24px;width:13px;height:13px"><use href="#x"/></svg><div class="tb" style="left:1755px;top:23px">Cancel</div>
 <svg class="i" style="left:1838px;top:24px"><use href="#save"/></svg><div class="tb" style="left:1864px;top:23px">Save</div>
 <div class="dbox">
  <div class="dh" style="left:0">Order ID</div><div class="dh" style="left:206px">Order Date</div><div class="dh" style="left:412px">Required Date</div><div class="dh" style="left:618px">Shipped Date</div><div class="dh" style="left:824px">Ship Address</div><div class="dh" style="left:1030px;width:202px">Country</div>
  <div class="inp" style="left:4px">8272731</div><div class="inp" style="left:210px">04/17/2018</div><div class="inp" style="left:416px">04/17/2018</div><div class="inp" style="left:622px">04/17/2018</div><div class="inp" style="left:828px">Great West Road 1234, London</div><div class="inp" style="left:1034px;width:194px">UK</div>
 </div>
 <div class="h1" style="left:664px;top:313px">Orders</div>
 <svg class="i" style="left:664px;top:373px"><use href="#plus"/></svg><div class="tb" style="left:690px;top:372px">New</div>
 <svg class="i" style="left:753px;top:373px"><use href="#ref"/></svg><div class="tb" style="left:781px;top:372px">Refresh</div>
 <svg class="i" style="left:862px;top:373px"><use href="#lst"/></svg><div class="tb" style="left:888px;top:372px">List</div>
 <div class="tb" style="left:950px;top:368px">···</div>
 <div class="sb" style="left:1575px;top:364px;width:321px;height:32px;line-height:28px;font-size:12px">Search list<svg style="top:7px"><use href="#lens"/></svg></div>
 <div class="th" style="left:664px;top:419px">
  <i class="cb" style="top:11px"></i>
  <div class="hc" style="left:36px;width:200px">Order ID<i></i></div>
  <div class="hc" style="left:236px;width:200px">Order Date<i></i></div>
  <div class="hc" style="left:436px;width:200px">Required Date<i></i></div>
  <div class="hc" style="left:636px;width:200px">Shipped Date<i></i></div>
  <div class="hc" style="left:836px;width:200px">Ship Address<i></i></div>
  <div class="hc" style="left:1036px;width:196px">Country<i></i></div>
 </div>
 <div class="r" style="left:664px;top:465px"><i class="cb"></i><span class="c1">8272731</span><span class="c2">04/17/2018</span><span class="c3">04/17/2018</span><span class="c4">04/17/2018</span><span class="c5">Great West Road 1234, London</span><span class="c6">UK</span></div>
 <div class="r" style="left:664px;top:509px"><i class="cb"></i><span class="c1">8272731</span><span class="c2">04/17/2018</span><span class="c3">04/17/2018</span><span class="c4">04/17/2018</span><span class="c5">Great West Road 1234</span><span class="c6">Germany</span></div>
 <div class="r sel" style="left:664px;top:553px"><i class="cb on"></i><span class="c1">8272731</span><span class="c2">04/17/2018</span><span class="c3">04/17/2018</span><span class="c4">04/17/2018</span><span class="c5">Great West Road 1234</span><span class="c6">Finland</span></div>
 <div class="r" style="left:664px;top:597px"><i class="cb"></i><span class="c1">8272731</span><span class="c2">04/17/2018</span><span class="c3">04/17/2018</span><span class="c4">04/17/2018</span><span class="c5">Great West Road 1234</span><span class="c6">Ukraine</span></div>
 <div class="r" style="left:664px;top:641px"><i class="cb"></i><span class="c1">8272731</span><span class="c2">04/17/2018</span><span class="c3">04/17/2018</span><span class="c4">04/17/2018</span><span class="c5">Great West Road 1234</span><span class="c6">Ukraine</span></div>
 <div class="r" style="left:664px;top:685px"><i class="cb"></i><span class="c1">8272731</span><span class="c2">04/17/2018</span><span class="c3">04/17/2018</span><span class="c4">04/17/2018</span><span class="c5">Great West Road 1234</span><span class="c6">Ukraine</span></div>
 <div class="r" style="left:664px;top:729px"><i class="cb"></i><span class="c1">8272731</span><span class="c2">04/17/2018</span><span class="c3">04/17/2018</span><span class="c4">04/17/2018</span><span class="c5">Great West Road 1234</span><span class="c6">Ukraine</span></div>
 <div class="r" style="left:664px;top:773px"><i class="cb"></i><span class="c1">8272731</span><span class="c2">04/17/2018</span><span class="c3">04/17/2018</span><span class="c4">04/17/2018</span><span class="c5">Great West Road 1234</span><span class="c6">Ukraine</span></div>
 <div class="r" style="left:664px;top:817px"><i class="cb"></i><span class="c1">8272731</span><span class="c2">04/17/2018</span><span class="c3">04/17/2018</span><span class="c4">04/17/2018</span><span class="c5">Great West Road 1234</span><span class="c6">Ukraine</span></div>
 <div class="r" style="left:664px;top:861px"><i class="cb"></i><span class="c1">8272731</span><span class="c2">04/17/2018</span><span class="c3">04/17/2018</span><span class="c4">04/17/2018</span><span class="c5">Great West Road 1234</span><span class="c6">Ukraine</span></div>
 <div class="r" style="left:664px;top:905px"><i class="cb"></i><span class="c1">8272731</span><span class="c2">04/17/2018</span><span class="c3">04/17/2018</span><span class="c4">04/17/2018</span><span class="c5">Great West Road 1234</span><span class="c6">Ukraine</span></div>
 <div class="r" style="left:664px;top:949px"><i class="cb"></i><span class="c1">8272731</span><span class="c2">04/17/2018</span><span class="c3">04/17/2018</span><span class="c4">04/17/2018</span><span class="c5">Great West Road 1234</span><span class="c6">Ukraine</span></div>
 <div class="r" style="left:664px;top:993px"><i class="cb"></i><span class="c1">8272731</span><span class="c2">04/17/2018</span><span class="c3">04/17/2018</span><span class="c4">04/17/2018</span><span class="c5">Great West Road 1234</span><span class="c6">Ukraine</span></div>
 <div class="r" style="left:664px;top:1037px"><i class="cb"></i><span class="c1">8272731</span><span class="c2">04/17/2018</span><span class="c3">04/17/2018</span><span class="c4">04/17/2018</span><span class="c5">Great West Road 1234</span><span class="c6">Ukraine</span></div>
</div>
</body></html>
